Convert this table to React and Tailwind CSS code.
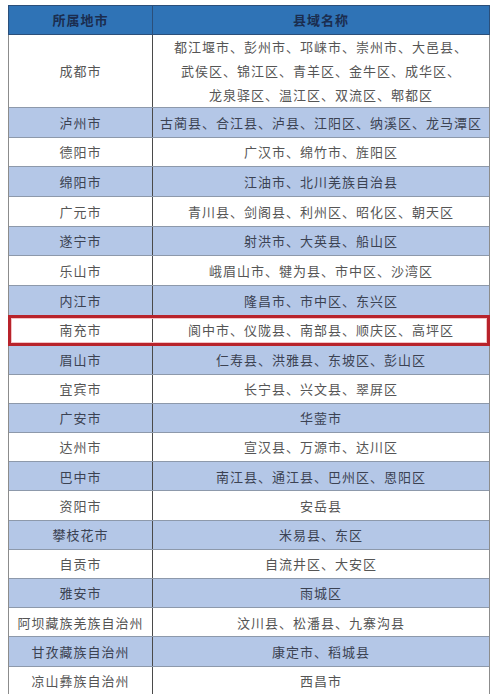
import React from "react";

const rows = [
  ["泸州市", "古蔺县、合江县、泸县、江阳区、纳溪区、龙马潭区", true],
  ["德阳市", "广汉市、绵竹市、旌阳区", false],
  ["绵阳市", "江油市、北川羌族自治县", true],
  ["广元市", "青川县、剑阁县、利州区、昭化区、朝天区", false],
  ["遂宁市", "射洪市、大英县、船山区", true],
  ["乐山市", "峨眉山市、犍为县、市中区、沙湾区", false],
  ["内江市", "隆昌市、市中区、东兴区", true],
  ["南充市", "阆中市、仪陇县、南部县、顺庆区、高坪区", false, true],
  ["眉山市", "仁寿县、洪雅县、东坡区、彭山区", true],
  ["宜宾市", "长宁县、兴文县、翠屏区", false],
  ["广安市", "华蓥市", true],
  ["达州市", "宣汉县、万源市、达川区", false],
  ["巴中市", "南江县、通江县、巴州区、恩阳区", true],
  ["资阳市", "安岳县", false],
  ["攀枝花市", "米易县、东区", true],
  ["自贡市", "自流井区、大安区", false],
  ["雅安市", "雨城区", true],
  ["阿坝藏族羌族自治州", "汶川县、松潘县、九寨沟县", false],
  ["甘孜藏族自治州", "康定市、稻城县", true],
  ["凉山彝族自治州", "西昌市", false],
];

const font = { fontFamily: '"Noto Sans CJK SC", "Noto Sans", sans-serif' };

export default function App() {
  return (
    <div className="w-[500px] h-[694px] overflow-hidden bg-white pt-[5px] pl-[8px]" style={font}>
      <div className="w-[482px] border-l border-r border-[#8c8c8c]">
        <div className="grid grid-cols-[144px_1fr] h-[30px] bg-[#2f73b6] border border-[#2b4f7a] -ml-px -mr-px text-[13px] font-bold text-[#1b2d4f] tracking-[1px]">
          <div className="flex items-center justify-center border-r border-[#2b4f7a]">所属地市</div>
          <div className="flex items-center justify-center">县域名称</div>
        </div>
        <div className="grid grid-cols-[144px_1fr] h-[73px] border-b border-[#8d99ab] text-[13px] text-[#555] tracking-[1px] bg-white">
          <div className="flex items-center justify-center border-r border-[#4a4a4a]">成都市</div>
          <div className="flex flex-col items-center justify-center leading-[24px]">
            <div>都江堰市、彭州市、邛崃市、崇州市、大邑县、</div>
            <div>武侯区、锦江区、青羊区、金牛区、成华区、</div>
            <div>龙泉驿区、温江区、双流区、郫都区</div>
          </div>
        </div>
        {rows.map(([city, counties, blue, red], i) => (
          <div
            key={city}
            className={
              "relative grid grid-cols-[144px_1fr] border-b border-[#8d99ab] text-[13px] tracking-[1px] " +
              (i < 8 ? "h-[29.7px] " : "h-[29.2px] ") +
              (blue ? "bg-[#b4c7e7] text-[#3b4252]" : "bg-white text-[#555]")
            }
          >
            <div className="flex items-center justify-center border-r border-[#4a4a4a] whitespace-nowrap">{city}</div>
            <div className="flex items-center justify-center whitespace-nowrap">{counties}</div>
            {red && (
              <div className="absolute -left-px -right-px -top-px -bottom-px border-[3px] border-[#b8232b] shadow-[inset_0_0_0_1px_#f3c2c4]" />
            )}
          </div>
        ))}
      </div>
    </div>
  );
}
